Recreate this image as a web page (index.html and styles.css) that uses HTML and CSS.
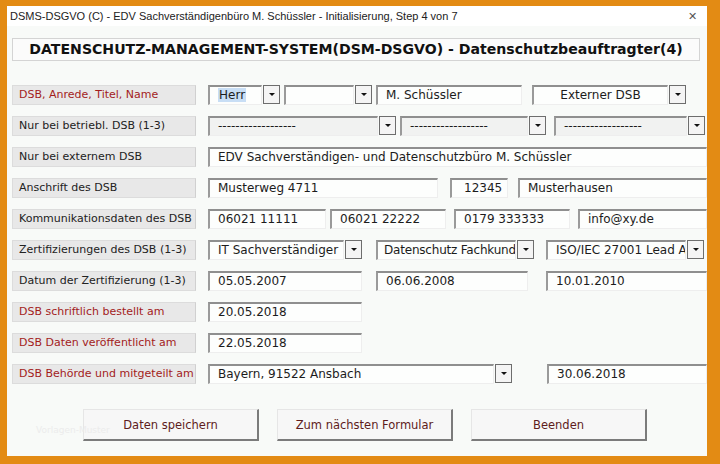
FILE: index.html
```html
<!DOCTYPE html>
<html lang="de">
<head>
  <meta charset="UTF-8" />
  <title>DSMS-DSGVO - Initialisierung</title>
  <link rel="stylesheet" href="styles.css">
</head>
<body>
  <div class="window">
    <div class="titlebar">
      <span class="title">DSMS-DSGVO (C) - EDV Sachverständigenbüro M. Schüssler - Initialisierung, Step 4 von 7</span>
      <span class="close">✕</span>
    </div>

    <div class="content">
      <div class="heading">DATENSCHUTZ-MANAGEMENT-SYSTEM(DSM-DSGVO) - Datenschutzbeauftragter(4)</div>

      <div class="form">
        <div class="row">
          <div class="label red">DSB, Anrede, Titel, Name</div>
          <div class="combo w55"><div class="field"><span class="sel">Herr</span></div><div class="drop"></div></div>
          <div class="combo w72 ml4"><div class="field"></div><div class="drop"></div></div>
          <div class="field w146 ml4">M. Schüssler</div>
          <div class="combo w154 ml10"><div class="field center">Externer DSB</div><div class="drop"></div></div>
        </div>

        <div class="row">
          <div class="label">Nur bei betriebl. DSB (1-3)</div>
          <div class="combo w170"><div class="field grey">------------------</div><div class="drop"></div></div>
          <div class="combo w129 ml4"><div class="field grey">------------------</div><div class="drop"></div></div>
          <div class="combo w132 ml8"><div class="field grey">------------------</div><div class="drop"></div></div>
        </div>

        <div class="row">
          <div class="label">Nur bei externem DSB</div>
          <div class="field grow">EDV Sachverständigen- und Datenschutzbüro M. Schüssler</div>
        </div>

        <div class="row">
          <div class="label">Anschrift des DSB</div>
          <div class="field w230">Musterweg 4711</div>
          <div class="field w58 ml12 pad12">12345</div>
          <div class="field grow ml10">Musterhausen</div>
        </div>

        <div class="row">
          <div class="label">Kommunikationsdaten des DSB</div>
          <div class="field w118">06021 11111</div>
          <div class="field w116 ml4">06021 22222</div>
          <div class="field w116 ml8">0179 333333</div>
          <div class="field grow ml8">info@xy.de</div>
        </div>

        <div class="row">
          <div class="label">Zertifizierungen des DSB (1-3)</div>
          <div class="combo w136"><div class="field">IT Sachverständiger</div><div class="drop"></div></div>
          <div class="combo w140 ml14"><div class="field tight">Datenschutz Fachkund</div><div class="drop"></div></div>
          <div class="combo w140 ml12"><div class="field">ISO/IEC 27001 Lead A</div><div class="drop"></div></div>
        </div>

        <div class="row">
          <div class="label">Datum der Zertifizierung (1-3)</div>
          <div class="field w154">05.05.2007</div>
          <div class="field w152 ml14">06.06.2008</div>
          <div class="field grow ml18">10.01.2010</div>
        </div>

        <div class="row">
          <div class="label red">DSB schriftlich bestellt am</div>
          <div class="field w154">20.05.2018</div>
        </div>

        <div class="row">
          <div class="label red">DSB Daten veröffentlicht am</div>
          <div class="field w154">22.05.2018</div>
        </div>

        <div class="row">
          <div class="label red">DSB Behörde und mitgeteilt am</div>
          <div class="combo w286"><div class="field">Bayern, 91522 Ansbach</div><div class="drop"></div></div>
          <div class="field grow ml35">30.06.2018</div>
        </div>
      </div>

      <div class="actions">
        <span class="watermark">Vorlagen-Muster</span>
        <button class="btn">Daten speichern</button>
        <button class="btn">Zum nächsten Formular</button>
        <button class="btn">Beenden</button>
      </div>
    </div>
  </div>
</body>
</html>
```

FILE: styles.css
```css
html, body {
  margin: 0;
  height: 100%;
}

body {
  background: #e38b14;
  font-family: "DejaVu Sans", Verdana, sans-serif;
  font-size: 11px;
  color: #1c1c1c;
}

.window {
  box-sizing: border-box;
  height: 464px;
  width: 720px;
  border-style: solid;
  border-color: #e38b14;
  border-width: 6px 13px 8px 7px;
  background: #f8faf8;
}

.titlebar {
  display: flex;
  align-items: center;
  justify-content: space-between;
  height: 20px;
  padding: 0 10px 0 3px;
  background: #ffffff;
  font-family: "Liberation Sans", Arial, sans-serif;
  font-size: 11px;
  color: #222;
}

.close {
  font-size: 11px;
  color: #555;
}

.content {
  padding: 12px 0 0 5px;
}

.heading {
  width: 686px;
  height: 21px;
  line-height: 21px;
  border: 1px solid #d4d4d4;
  background: #fbfbfb;
  text-align: center;
  font-weight: bold;
  font-size: 14.1px;
  color: #111;
}

.form {
  margin-top: 24px;
}

.row {
  display: flex;
  height: 20px;
  margin-bottom: 11px;
}

.label {
  box-sizing: border-box;
  width: 184px;
  height: 20px;
  line-height: 18px;
  padding-left: 6px;
  margin-right: 12px;
  background: #e8e8e8;
  border: 1px solid #dcdcdc;
  border-right-color: #d0d0d0;
  color: #222;
  white-space: nowrap;
}

.label.red {
  color: #a31c1c;
}

.field {
  box-sizing: border-box;
  height: 20px;
  line-height: 17px;
  padding-left: 8px;
  background: #fdfefd;
  border-top: 2px solid #8f8f8f;
  border-left: 2px solid #9a9a9a;
  border-right: 1px solid #eeeeee;
  border-bottom: 1px solid #eeeeee;
  font-size: 12px;
  white-space: nowrap;
  overflow: hidden;
}

.field.tight {
  padding-left: 6px;
  letter-spacing: -0.2px;
}

.field.grey {
  background: #f1f2f1;
}

.field.center {
  text-align: center;
  padding-left: 0;
}

.sel {
  background: #c8def5;
  padding: 0 1px;
}

.combo {
  display: flex;
  gap: 1px;
}

.combo .field {
  flex: 1;
}

.drop {
  box-sizing: border-box;
  width: 17px;
  height: 19px;
  flex: none;
  border: 1px solid #6d6d6d;
  background: #f4f4f4;
  display: flex;
  align-items: center;
  justify-content: center;
}

.drop::after {
  content: "";
  border-left: 3px solid transparent;
  border-right: 3px solid transparent;
  border-top: 3px solid #111;
}

.grow { flex: 1; }
.pad12 { padding-left: 12px; }

.w55 { width: 72px; }
.w72 { width: 88px; }
.w146 { width: 146px; }
.w154 { width: 154px; }
.w170 { width: 188px; }
.w129 { width: 146px; }
.w132 { width: 151px; }
.w136 { width: 154px; }
.w140 { width: 158px; }
.w230 { width: 230px; }
.w58 { width: 58px; }
.w118 { width: 118px; }
.w116 { width: 116px; }
.w152 { width: 152px; }
.w286 { width: 304px; }

.ml4 { margin-left: 4px; }
.ml8 { margin-left: 8px; }
.ml10 { margin-left: 10px; }
.ml12 { margin-left: 12px; }
.ml14 { margin-left: 14px; }
.ml18 { margin-left: 18px; }
.ml35 { margin-left: 35px; }

.actions {
  position: relative;
  display: flex;
  gap: 18px;
  margin-top: 25px;
  padding-left: 71px;
}

.watermark {
  position: absolute;
  left: 24px;
  top: 16px;
  font-size: 9px;
  color: #ececec;
}

.btn {
  box-sizing: border-box;
  width: 176px;
  height: 32px;
  background: #f7f7f7;
  border-top: 1px solid #e6e6e6;
  border-left: 1px solid #e6e6e6;
  border-right: 2px solid #7b7b7b;
  border-bottom: 2px solid #7b7b7b;
  font-family: "DejaVu Sans", Verdana, sans-serif;
  font-size: 11.5px;
  color: #5e1c1c;
  padding: 0;
}
```
